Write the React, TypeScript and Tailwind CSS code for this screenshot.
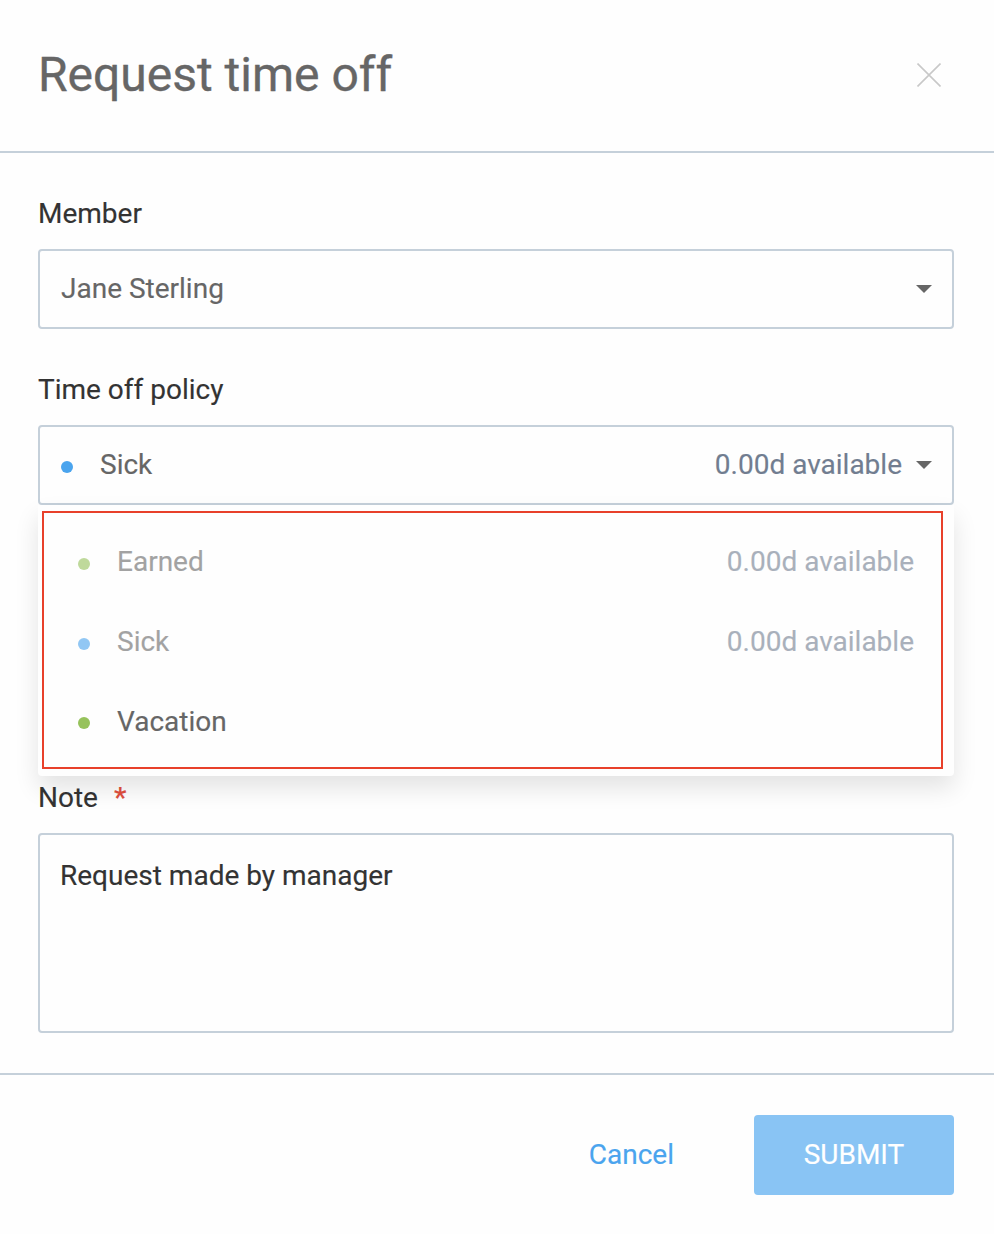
const Arrow = () => (
  <svg width="16" height="8" viewBox="0 0 16 8" className="block shrink-0"><path d="M0 0h16L8 8z" fill="#666" /></svg>
);

type PolicyRowProps = { name: string; dot: string; available?: string; dim?: boolean };

function PolicyRow({ name, dot, available, dim }: PolicyRowProps) {
  return (
    <div className={`flex h-20 items-center pl-[34px] pr-[27px] ${dim ? "opacity-60" : ""}`}>
      <span className={`h-3 w-3 rounded-full ${dim ? "mt-1" : "mt-0.5"} ${dot}`} />
      <span className="ml-[27px] text-[#666]">{name}</span>
      {available && <span className="ml-auto text-[#717d90]">{available}</span>}
    </div>
  );
}

export default function App() {
  return (
    <div className="flex h-[1234px] w-[994px] flex-col bg-[#fefefe] font-['Roboto',sans-serif] text-[28px] leading-8 text-[#333] [-webkit-text-stroke:0.15px]">
      <header className="flex h-[153px] items-start justify-between border-b-2 border-[#c5d0da] pl-[38px] pr-[53px]">
        <h1 className="mt-[47px] text-[48px] leading-[56px] text-[#666] [-webkit-text-stroke:0.35px]">Request time off</h1>
        <svg width="24" height="24" viewBox="0 0 24 24" className="mt-[63px]"><path d="M.5.5l23 23M23.5.5l-23 23" stroke="#c8c8c8" strokeWidth="1.6" /></svg>
      </header>
      <main className="flex flex-1 flex-col pl-[38px] pr-10">
        <label className="mt-[45px]">Member</label>
        <div className="mt-[19px] flex h-20 items-center justify-between rounded-[4px] border-2 border-[#c5d0da] px-5 text-[#666]">
          <span className="pl-px">Jane Sterling</span><Arrow />
        </div>
        <label className="mt-[45px]">Time off policy</label>
        <div className="relative mt-[19px]">
          <div className="flex h-20 items-center rounded-[4px] border-2 border-[#c5d0da] px-5 text-[#666]">
            <span className="mt-1 ml-px h-3 w-3 rounded-full bg-[#4aa4ee]" />
            <span className="ml-[27px]">Sick</span>
            <span className="ml-auto mr-[14px] text-[#717d90]">0.00d available</span><Arrow />
          </div>
          <div className="absolute left-0 top-20 h-[271px] w-[916px] rounded-b-[4px] bg-[#fefefe] pl-1 pt-[6px] shadow-[0_12px_24px_rgba(0,0,0,0.11)]">
            <div className="h-[258px] w-[901px] border-2 border-[#e8402a] pt-[9px]">
              <PolicyRow name="Earned" dot="bg-[#96c25b]" available="0.00d available" dim />
              <PolicyRow name="Sick" dot="bg-[#4aa4ee]" available="0.00d available" dim />
              <PolicyRow name="Vacation" dot="bg-[#96c25b]" />
            </div>
          </div>
        </div>
        <label className="mt-[277px]">Note <span className="ml-[9px] font-medium text-[#e04f3e]">*</span></label>
        <div className="mt-[19px] h-[200px] rounded-[4px] border-2 border-[#c5d0da] px-5 pt-[25px]">Request made by manager</div>
      </main>
      <footer className="flex h-[161px] items-center justify-end border-t-2 border-[#c5d0da] pr-10">
        <button className="mr-20 text-[#4aa4ee]">Cancel</button>
        <button className="h-20 w-[200px] rounded-[4px] bg-[#89c4f4] text-white">SUBMIT</button>
      </footer>
    </div>
  );
}
